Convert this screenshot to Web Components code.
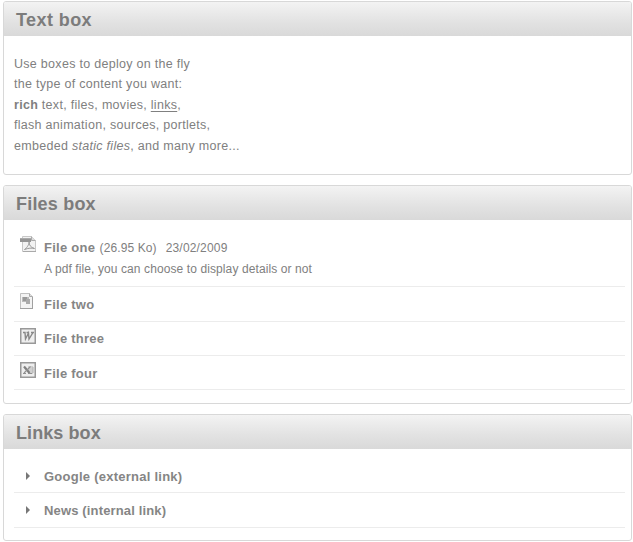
<!DOCTYPE html>
<html lang="en">
<head>
<meta charset="utf-8">
<title>Boxes</title>
<style>
body{margin:0;padding:1px 1px 0 3px;background:#fff;color:#808080;font:12.5px/20.5px "Liberation Sans",Arial,sans-serif;height:541px;box-sizing:border-box;overflow:hidden}
main{display:flex;flex-direction:column;gap:10px}
.rich{padding:17.5px 10px 0;letter-spacing:.29px}
a{color:inherit;text-underline-offset:2px}
</style>
</head>
<body>
<main>
<content-box heading="Text box" style="height:174px;--title-spacing:.42px"><div class="rich">Use boxes to deploy on the fly<br>the type of content you want:<br><b>rich</b> text, files, movies, <a href="#">links</a>,<br>flash animation, sources, portlets,<br>embeded <i>static files</i>, and many more...</div></content-box>
<content-box heading="Files box" style="height:219px;--title-spacing:.2px">
<box-row icon="pdf" label="File one" meta="(26.95 Ko)" date="23/02/2009" style="height:67px;--icon-shift:-1px">A pdf file, you can choose to display details or not</box-row>
<box-row icon="image" label="File two" style="height:35px;padding-bottom:5px;--icon-shift:-1px"></box-row>
<box-row icon="word" label="File three" style="height:34px;padding-bottom:5px;--icon-shift:0px"></box-row>
<box-row icon="excel" label="File four" style="height:34px;padding-bottom:4px;--icon-shift:-1px"></box-row>
</content-box>
<content-box heading="Links box" style="height:127px;--title-spacing:.08px">
<box-row icon="arrow" label="Google (external link)" style="height:44px;padding-bottom:4px;--icon-shift:2px"></box-row>
<box-row icon="arrow" label="News (internal link)" style="height:35px;padding-bottom:5px;--icon-shift:2px;--label-spacing:.15px"></box-row>
</content-box>
</main>
<script>
customElements.define('content-box', class extends HTMLElement {
  constructor() {
    super();
    this.attachShadow({mode: 'open'}).innerHTML = `<style>
:host{display:block;box-sizing:border-box;border:1px solid #d8d8d8;border-radius:3px;overflow:hidden;background:#fff}
h2{margin:0;height:34px;box-sizing:border-box;padding:0 12px;font:bold 18px/36px "Liberation Sans",Arial,sans-serif;letter-spacing:var(--title-spacing,.2px);color:#7c7c7c;background:linear-gradient(#f3f3f3,#e2e2e2 60%,#d9d9d9)}
</style><h2></h2><slot></slot>`;
    this.shadowRoot.querySelector('h2').textContent = this.getAttribute('heading');
  }
});

const icons = {
  pdf: `<path d="M2.5 .5h9l4 4v11h-13z" fill="#f2f2f2" stroke="#c8c8c8"/><path d="M11.5.5v4h4" fill="#ddd" stroke="#aaa"/><path d="M0 2h11v4H0z" fill="#959595"/><path d="M0 2h11v1H0z" fill="#aaa"/><path d="M4.500 13.500c3-2 5-6 4.500-8 0 4 2 6 5.500 7-3-.7-6-.5-10 1z" fill="none" stroke="#999"/><path d="M3 15.500h13" stroke="#aaa"/>`,
  image: `<path d="M.5.5h9l3 3v12H.5z" fill="#f3f3f3" stroke="#c0c0c0"/><path d="M9.500.5v3h3" fill="#ddd" stroke="#aaa"/><path d="M2 4h7v5H2z" fill="#bbb"/><path d="M3 4h4v4H3z" fill="#999"/><path d="M6 6h4v5H6z" fill="#aaa"/><path d="M0 15.500h13M12.500 4v12" stroke="#a0a0a0"/>`,
  word: `<path d="M.75.75h14.500v14.500H.75z" fill="#eee" stroke="#999" stroke-width="1.500"/><path d="M3 4.500h2l.5 6.500L8.500 5l.5 6L13 4.500M6.500 4.500h2M11 4.500h3" fill="none" stroke="#888" stroke-width="1.400"/>`,
  excel: `<path d="M.75.75h14.500v14.500H.75z" fill="#eee" stroke="#999" stroke-width="1.500"/><path d="M8 5h5v6H8M8 7h5M8 9h5" fill="none" stroke="#b0b0b0"/><path d="M4 4.500l5.500 6.500" stroke="#808080" stroke-width="2.200"/><path d="M10.500 4.500l-6.500 6.500M3 11.500h3M8 11.500h4" stroke="#909090" stroke-width="1.100"/>`,
  arrow: `<path d="M6 4l4 4-4 4z" fill="#777"/>`
};

customElements.define('box-row', class extends HTMLElement {
  constructor() {
    super();
    const attr = name => this.getAttribute(name) || '';
    this.attachShadow({mode: 'open'}).innerHTML = `<style>
:host{display:flex;flex-direction:column;justify-content:flex-end;box-sizing:border-box;margin:0 6px 0 10px;border-bottom:1px solid #ececec;padding:0 0 6px 6px}
.row{display:grid;grid-template-columns:16px 1fr;column-gap:8px;line-height:21px}
svg{display:block;margin-top:var(--icon-shift,0)}
b{font-size:13px;letter-spacing:var(--label-spacing,.25px);color:#858585}
.meta{font-size:12px;letter-spacing:.1px;margin-left:1px}.date{font-size:12px;letter-spacing:.18px;margin-left:9px}
.desc{grid-column:2;font-size:12px;letter-spacing:.1px}
</style><div class="row"><svg width="16" height="16" viewBox="0 0 16 16">${icons[attr('icon')]}</svg><div><b>${attr('label')}</b>${attr('meta') ? ` <span class="meta">${attr('meta')}</span><span class="date">${attr('date')}</span>` : ''}</div>${this.textContent ? '<div class="desc"><slot></slot></div>' : ''}</div>`;
  }
});
</script>
</body>
</html>
